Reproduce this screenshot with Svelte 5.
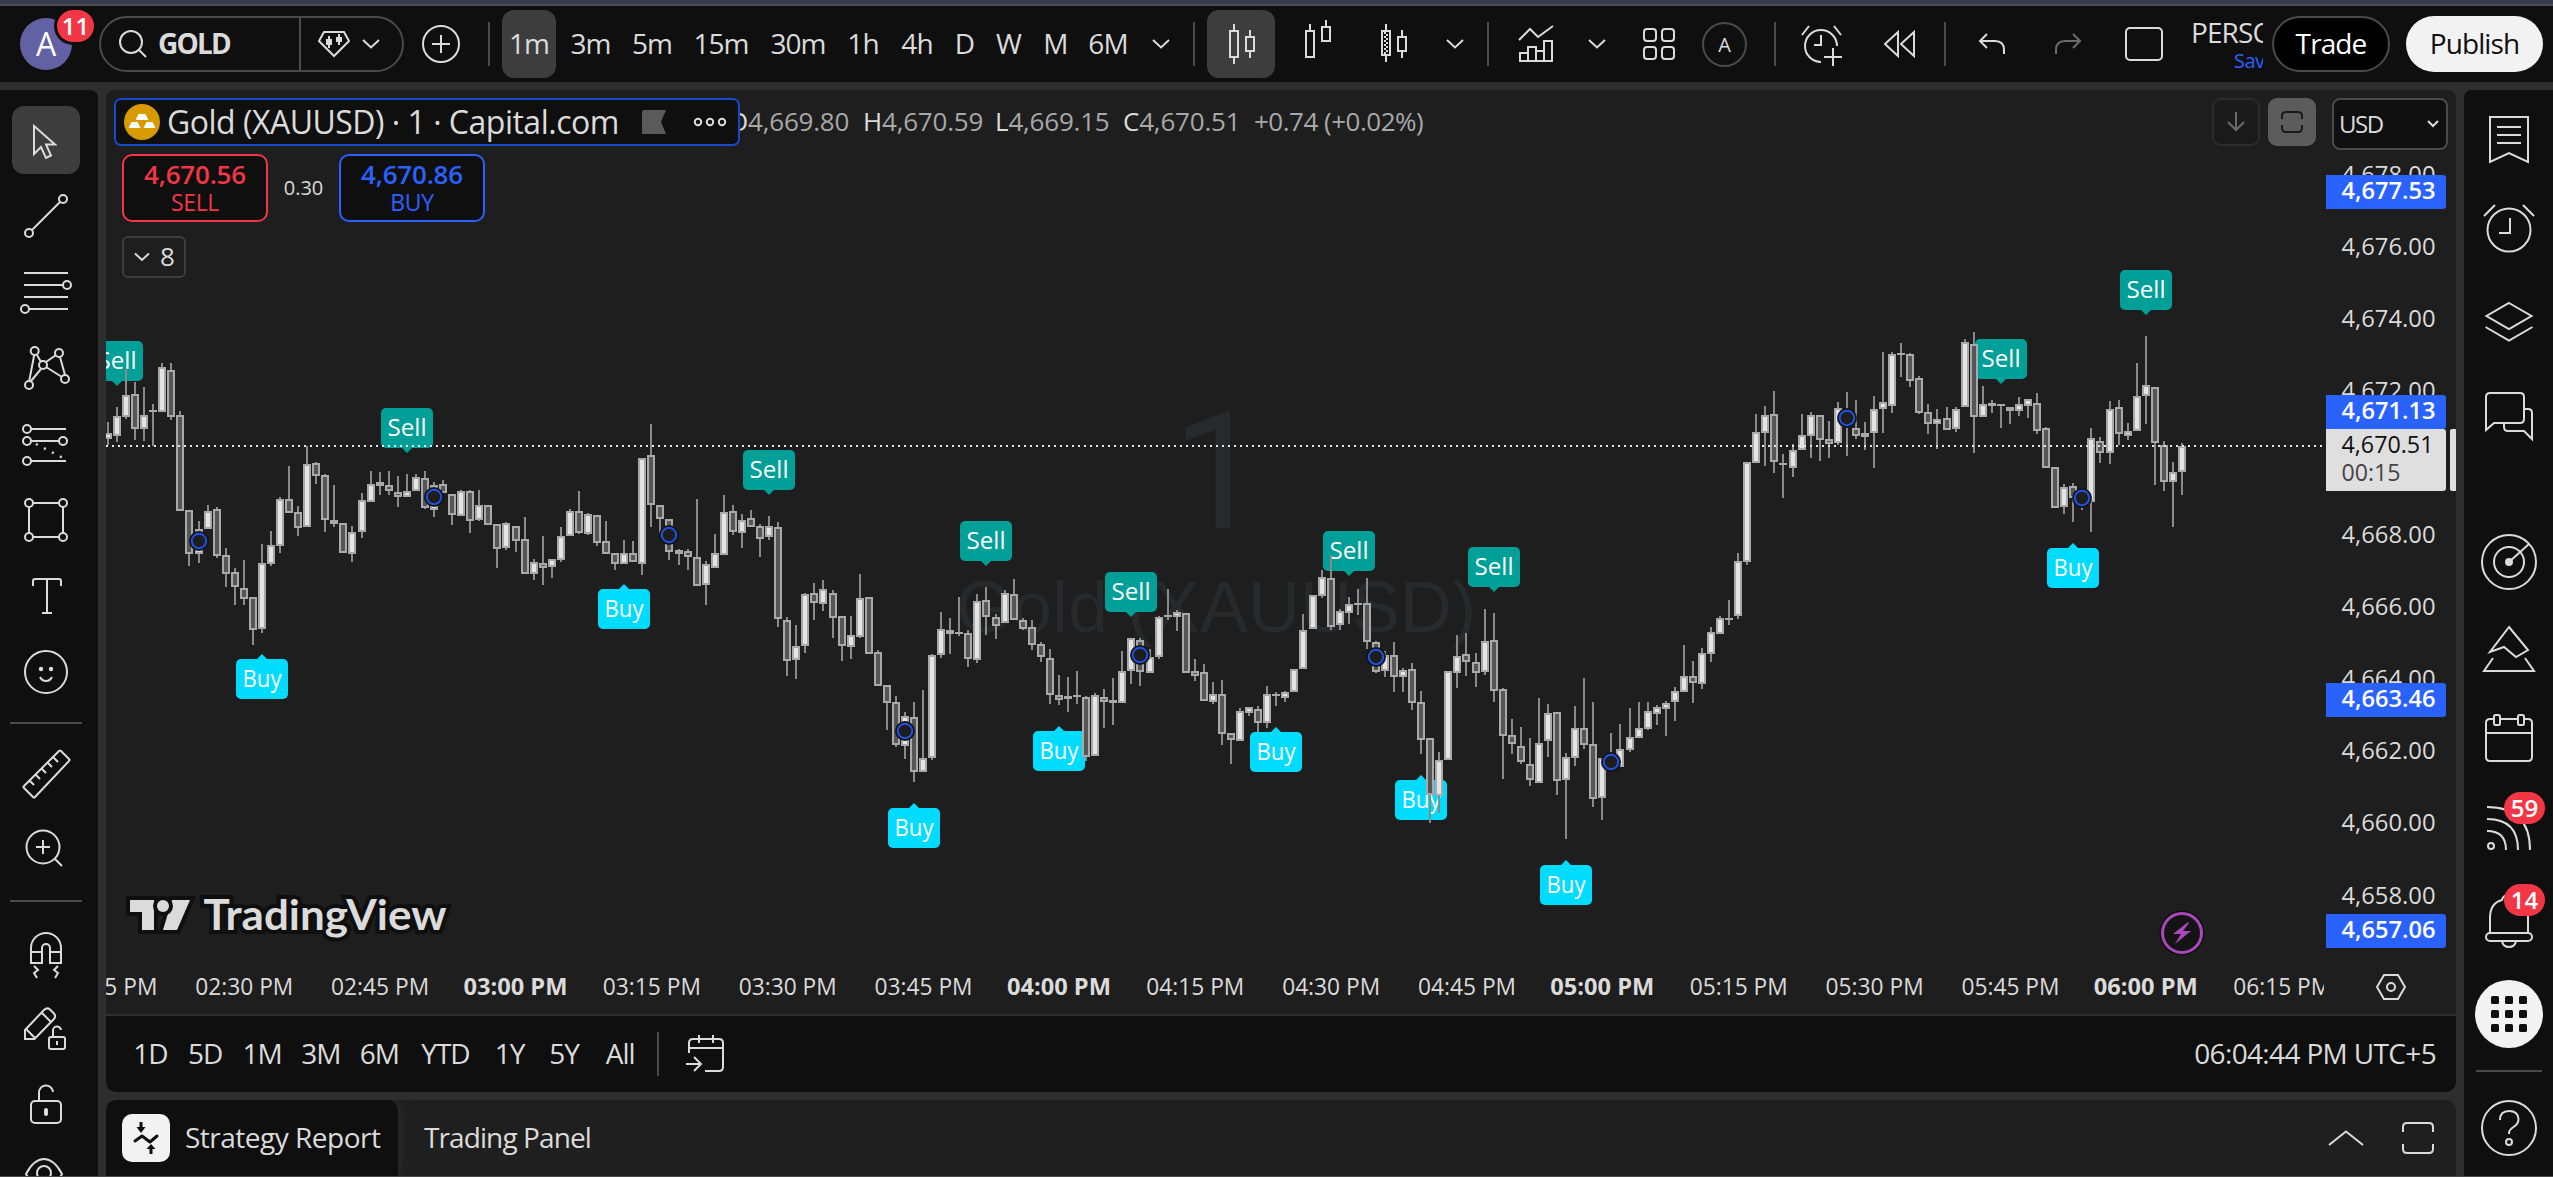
<script>
  const intervals = [
    ['1m', 54], ['3m', 54], ['5m', 54], ['15m', 69], ['30m', 70], ['1h', 45],
    ['4h', 48], ['D', 32], ['W', 41], ['M', 38], ['6M', 52]
  ];
  const ranges = [
    ['1D', 29], ['5D', 31], ['1M', 34], ['3M', 34], ['6M', 34],
    ['YTD', 49], ['1Y', 30], ['5Y', 30], ['All', 33]
  ];

  // Bars: high, body top, body bottom, low, w (up) or d (down).
  // Each group has its own origin and its own resolution in units per pixel.
  const groups = [
    { base: 290, unit: 3, bars: `396,430,446,466,w 351,378,438,456,w 235,315,381,386,w 276,312,416,450,d 290,375,416,452,w 342,360,366,468,d 219,231,366,366,w 219,240,381,390,d 363,375,663,663,d 660,660,792,828,d 693,717,792,819,w 645,663,717,717,w 651,657,798,804,d 774,795,852,890,d 834,846,891,945,d 810,894,927,945,d 921,921,1020,1065,d 762,819,1017,1028,w 723,765,822,828,w 621,627,768,789,w 528,627,669,669,d 648,666,714,738,d 468,522,711,711,w 516,519,558,582,d 552,555,690,726,d 585,690,702,711,d 699,699,789,789,d 708,726,792,816,w 609,630,726,744,w 543,582,636,636,w 546,576,588,615,d 543,585,603,615,d 558,606,621,651,d 552,603,621,621,w 552,561,603,603,w 543,564,655,657,d 576,585,660,681,w 570,582,609,609,d 612,612,675,705,d 600,603,678,678,w 600,603,693,729,d 600,645,690,693,w 645,645,705,705,d 702,702,777,834,d 697,699,774,780,w 708,708,753,786,d 681,747,852,852,d 807,816,852,870,w 738,819,834,885,d 807,807,831,864,w 711,738,810,816,w 657,663,738,738,w 603,663,729,732,d 669,672,732,735,w 675,675,759,768,d 693,753,792,792,d 789,789,822,840,d 750,789,822,822,w 753,789,816,816,d` },
    { base: 400, unit: 3, bars: `174,174,492,525,w 72,165,315,381,d 315,315,357,400,d 357,357,456,480,d 447,450,462,495,d 447,453,471,510,d 297,471,558,558,d 483,492,555,615,w 402,459,504,504,w 285,336,465,465,w 315,333,396,405,d 342,360,399,444,w 330,354,381,381,d 372,378,417,471,d 348,378,411,420,w 366,381,657,681,d 651,660,783,828,d 675,738,780,837,w 579,582,738,759,w 549,579,609,660,d 540,567,612,633,w 570,579,654,714,d 648,648,738,783,d 648,705,741,777,w 522,594,711,714,w 591,591,762,762,d 750,756,858,858,d 855,855,909,990,d 888,906,1035,1041,d 936,948,1038,1077,w 906,951,1116,1146,d 870,1074,1116,1116,w 762,765,1074,1080,w 636,687,765,774,w 654,690,702,762,d 591,696,702,708,d 690,699,777,801,d 582,603,780,789,w 561,600,651,705,d 642,651,678,717,d 570,579,669,669,w 537,582,660,660,d 654,660,687,690,d 660,681,735,750,d 726,732,771,786,d 747,774,885,912,d 825,885,900,915,d 831,888,897,936,d 813,885,891,912,d 888,891,1071,1083,d 879,885,1068,1068,w 867,891,906,984,d 834,900,909,975,d 753,813,909,909,w 714,714,813,852,w 714,720,816,858,d 747,771,819,819,w 648,651,771,777,w 567,645,651,660,d 630,636,651,693,w 639,639,819,819,d 777,813,828,843,d 792,816,903,903,d 846,882,906,912,w 840,882,1002,1035,d 999,999,1020,1092,d 924,933,1023,1023,w 921,921,939,948,w 918,927,969,996,d 858,882,969,984,w 876,882,888,918,d 873,876,894,906,w 807,807,876,876,w 642,690,807,807,w 585,585,687,687,w 510,531,588,594,w 465,534,681,690,d 627,633,675,690,w 591,612,639,672,w 567,609,615,645,d 534,609,726,747,d 723,726,816,819,d 753,765,813,831,w 726,765,831,876,d 804,810,831,876,w 789,807,909,930,d 873,906,1020,1062,d 1014,1014,1186,1269,d 1056,1080,1188,1239,w 813,813,1080,1080,w 705,768,819,864,w 699,762,786,828,d 759,786,819,861,d 627,723,816,825,w 639,720,873,906,d 864,867,1008,1137,d 957,1005,1032,1062,d 981,1038,1086,1092,d 1014,1092,1140,1158,d 894,1029,1149,1149,w 912,939,1023,1071,w 936,936,1143,1185,d 1059,1071,1140,1317,w 918,984,1074,1098,w 834,984,1035,1047,d 906,1032,1197,1221,d 1074,1074,1194,1260,w 999,1068,1080,1100,w 972,1047,1101,1101,w 924,1011,1050,1056,w 906,984,1014,1014,w 906,933,987,990,w 915,921,942,975,w 903,909,927,1008,w 861,873,906,963,w 735,828,876,876,w 783,828,849,909,d` },
    { base: 290, unit: 2.8, bars: `1002,1016,1103,1117,w 944,958,1019,1042,w 913,918,963,963,w 868,918,923,938,d 736,759,913,921,w 482,482,762,770,w 347,398,484,484,w 325,350,400,493,w 283,347,482,512,d 459,484,490,582,d 431,448,498,524,w 347,406,448,448,w 342,350,409,470,w 350,350,420,479,d 367,417,431,470,d 314,330,428,433,w 286,335,380,465,d 308,386,409,417,d 370,400,412,447,d 297,333,400,498,w 174,314,333,400,w 174,179,325,344,w 148,176,182,244,d 176,179,255,272,d 241,246,344,347,d 319,342,375,403,d 333,361,375,445,w 328,358,392,392,d 328,333,389,398,w 137,146,328,328,w 118,151,356,456,d 269,319,356,356,w 308,316,325,344,d 319,319,325,386,d 328,328,339,375,d 300,319,339,353,w 305,305,325,358,w 288,316,395,403,d 384,386,498,498,d 496,496,610,610,d 543,552,608,627,w 540,549,582,650,d 560,570,595,616,d 386,414,594,678,w 412,423,456,484,d 311,333,456,487,w 308,328,403,434,d 372,395,409,420,w 204,297,395,395,w 129,266,297,375,w 272,272,428,546,d 423,434,538,563,d 482,510,538,664,w 428,437,510,574,w` }
  ];

  const barX = (i) => Math.round(2182 - (229 - i) * 9.057);

  const bars = groups
    .flatMap((g) =>
      g.bars.split(' ').map((s) => {
        const p = s.split(',');
        const [h, t, b, l] = p.slice(0, 4).map((v) => Math.round(g.base + v / g.unit));
        return { h, t, b, l, up: p[4] === 'w' };
      })
    )
    .map((b, i) => ({ ...b, x: barX(i) }));

  const sells = [[1, 341], [33, 408], [73, 450], [97, 521], [113, 572], [137, 531], [153, 547], [209, 339], [225, 270]];
  const buys = [[17, 659], [57, 589], [89, 808], [105, 731], [129, 732], [145, 780], [161, 865], [217, 548]];
  const rings = [[10, 541], [36, 497], [62, 535], [88, 731], [114, 655], [140, 657], [166, 762], [192, 418], [218, 498]];

  const prices = [
    ['4,678.00', 175], ['4,676.00', 247], ['4,674.00', 319], ['4,672.00', 391], ['4,668.00', 535],
    ['4,666.00', 607], ['4,664.00', 679], ['4,662.00', 751], ['4,660.00', 823], ['4,658.00', 896]
  ];
  const levels = [['4,677.53', 175], ['4,671.13', 395], ['4,663.46', 683], ['4,657.06', 914]];

  const times = Array.from({ length: 17 }, (_, i) => {
    const m = 135 + i * 15;
    const text = `0${Math.floor(m / 60)}:${String(m % 60).padStart(2, '0')} PM`;
    return { text, x: 2145.8 - (15 - i) * 135.86, hour: m % 60 === 0 };
  });
</script>

{#snippet chevron()}
  <svg class="ic" width="18" height="10" viewBox="0 0 18 10"><path d="M1 1l8 7.500 8-7.500" /></svg>
{/snippet}

<div class="page">
  <div class="strip"></div>
  <header class="toolbar">
    <div class="avatar">A<span class="badge self">11</span></div>
    <div class="search">
      <div class="query">
        <svg class="ic" width="30" height="30" viewBox="0 0 30 30"><circle cx="13" cy="13" r="11" /><path d="M21 21l7 7" /></svg>
        <b>GOLD</b>
      </div>
      <div class="gem">
        <svg class="ic" width="32" height="28" viewBox="0 0 32 28"><path d="M6 2h20l5 9-15 15L1 11z" /><path d="M11 6v12M21 4v11" /><path class="solid" stroke="none" d="M8 9h6v6H8zM18 7h6v5h-6z" /></svg>
        {@render chevron()}
      </div>
    </div>
    <svg class="ic add" width="40" height="40" viewBox="0 0 40 40"><circle cx="20" cy="20" r="18" /><path d="M11 20h18M20 11v18" /></svg>
    <i class="sep"></i>
    <nav class="intervals">
      {#each intervals as [label, w], i}
        <span class="btn" class:on={i === 0} style:width="{w}px">{label}</span>
      {/each}
    </nav>
    <span class="c1">{@render chevron()}</span>
    <i class="sep s2"></i>
    <div class="types">
      <span class="type on">
        <svg class="ic" width="68" height="68" viewBox="1207 10 68 68"><path d="M1230 31h8v26h-8zM1234 31v-7M1234 57v7M1246 37h8v14h-8zM1250 37v-7M1250 51v7" /></svg>
      </span>
      <svg class="ic" width="68" height="68" viewBox="1283 10 68 68"><path d="M1306 31h8v26h-8zM1310 31v-7M1322 27h8v14h-8zM1326 27v-7" /></svg>
      <svg class="ic" width="68" height="68" viewBox="1359 10 68 68"><path d="M1382 31h8v24h-8zM1386 31v-7M1386 55v7M1398 37h8v14h-8zM1402 37v-7M1402 51v7" /><path stroke-dasharray="2 2" d="M1385 32v22" /><path stroke-dasharray="2 2" d="M1387 34v20" /></svg>
    </div>
    <span class="c2">{@render chevron()}</span>
    <i class="sep s3"></i>
    <svg class="ic ind" width="36" height="40" viewBox="1518 24 36 40"><path d="M1519 40l11-11 8 8 15-11M1520 61V53h8v8M1528 61V47h8v14M1536 61V51h8v10M1544 61V41h8v20M1519 61h34" /></svg>
    <span class="c3">{@render chevron()}</span>
    <svg class="ic grid" width="34" height="34" viewBox="0 0 34 34"><rect x="2" y="2" width="12" height="12" rx="3" /><rect x="20" y="2" width="12" height="12" rx="3" /><rect x="2" y="20" width="12" height="12" rx="3" /><rect x="20" y="20" width="12" height="12" rx="3" /></svg>
    <span class="ring-a">A</span>
    <i class="sep s4"></i>
    <svg class="ic alert" width="44" height="44" viewBox="1801 23 44 44"><path d="M1838 46a16 16 0 1 0-16 16M1822 35v10h-7M1803 35l7-9M1842 35l-7-9M1834 48v18M1825 57h18" /></svg>
    <svg class="ic rew" width="32" height="28" viewBox="0 0 32 28"><path d="M15 2v24L2 14zM31 2v24L18 14z" /></svg>
    <i class="sep s5"></i>
    <svg class="ic undo" width="28" height="22" viewBox="0 0 28 22"><path d="M9 1L2 8l7 7M2 8h15q9 0 9 9v4" /></svg>
    <svg class="ic dim redo" width="28" height="22" viewBox="0 0 28 22"><path d="M19 1l7 7-7 7M26 8H11q-9 0-9 9v4" /></svg>
    <svg class="ic full" width="38" height="34" viewBox="0 0 38 34"><rect x="1" y="1" width="36" height="32" rx="4" /></svg>
    <div class="layout"><span>PERSO</span><em>Save</em></div>
    <span class="pill trade">Trade</span>
    <span class="pill publish">Publish</span>
  </header>

  <div class="body">
    <aside class="left">
      <svg class="ic sel" width="68" height="68" viewBox="12 106 68 68"><path d="M34 126v28l7-7 5 11 5-2.500-5-11h9z" /></svg>
      <svg class="ic" width="68" height="68" viewBox="12 182 68 68"><circle cx="29" cy="233" r="4" /><circle cx="63" cy="199" r="4" /><path d="M32 230l28-28" /></svg>
      <svg class="ic" width="68" height="68" viewBox="12 258 68 68"><path d="M24 273h44M24 285h39M24 297h44M29 309h39" /><circle cx="67" cy="285" r="4" /><circle cx="25" cy="309" r="4" /></svg>
      <svg class="ic" width="68" height="68" viewBox="12 334 68 68"><path d="M29.200 381l5-26M37 355l4 7M46 362l10-7M60 357l5 18M46 367l16 10M31 381l10-12" /><circle cx="34.700" cy="351" r="4" /><circle cx="59" cy="353" r="4" /><circle cx="43" cy="365" r="4" /><circle cx="29" cy="385" r="4" /><circle cx="65" cy="379" r="4" /></svg>
      <svg class="ic" width="68" height="68" viewBox="12 410 68 68"><path d="M31 429h35M31 441h28M31 461h35" /><circle cx="27" cy="429" r="4" /><circle cx="27" cy="441" r="4" /><circle cx="63" cy="441" r="4" /><circle cx="27" cy="461" r="4" /><path stroke-dasharray="2 7" stroke-width="2.500" d="M36 444l27 14" /></svg>
      <svg class="ic" width="68" height="68" viewBox="12 486 68 68"><path d="M33 503h26M33 537h26M29 507v26M63 507v26" /><circle cx="29" cy="503" r="4" /><circle cx="63" cy="503" r="4" /><circle cx="29" cy="537" r="4" /><circle cx="63" cy="537" r="4" /></svg>
      <svg class="ic" width="68" height="68" viewBox="12 562 68 68"><path d="M33 586v-5q0-2 2-2h24q2 0 2 2v5M47 579v34M42 613h10" /></svg>
      <svg class="ic" width="68" height="68" viewBox="12 638 68 68"><circle cx="46" cy="672" r="21" /><path d="M40 677q2 4 6 4t6-4" /><circle class="solid" stroke="none" cx="41" cy="669" r="2.200" /><circle class="solid" stroke="none" cx="51" cy="669" r="2.200" /></svg>
      <hr />
      <svg class="ic" width="68" height="68" viewBox="12 740 68 68"><path d="M59 751q1-1 2 0l8 8q1 1 0 2l-34 36q-1 1-2 0l-9-9q-1-1 0-2zM29 780l5 5M35 774l5 5M41 768l5 5M47 762l5 5M53 757l5 5" /></svg>
      <svg class="ic" width="68" height="68" viewBox="12 816 68 68"><circle cx="43" cy="847" r="16.500" /><path d="M55 859l7 7M36 847h14M43 840v14" /></svg>
      <hr />
      <svg class="ic" width="68" height="68" viewBox="12 918 68 68"><path d="M31 963v-15a15 15 0 0 1 30 0v15H50v-15a4 4 0 0 0-8 0v15zM31 952h11M50 952h11M34 966l4 4-4 3 3 5M58 966l-4 4 4 3-3 5" /></svg>
      <svg class="ic" width="68" height="68" viewBox="12 994 68 68"><path d="M25 1039v-9l19-20q3-3 6-.500l4 4q2.500 3-.500 6l-19 19.500zM42 1013l9 9M26 1029l9 9" /><rect x="49" y="1037" width="16" height="12" rx="2" /><path d="M53 1037v-6a4 4 0 0 1 8-1M57 1041v4" /></svg>
      <svg class="ic" width="68" height="68" viewBox="12 1070 68 68"><rect x="31" y="1101" width="30" height="22" rx="4" /><path d="M39 1101v-8a7 7 0 0 1 14-1" /><rect class="solid" x="45" y="1109" width="2" height="6" rx="1" /></svg>
      <svg class="ic" width="68" height="68" viewBox="12 1146 68 68"><path d="M26 1174q8-15 18-15t18 15q-8 15-18 15t-18-15z" /><circle cx="44" cy="1173" r="7" /></svg>
    </aside>

    <main>
      <section class="chart">
        <svg class="plot" width="2350" height="924" viewBox="106 90 2350 924">
          <defs><clipPath id="pane"><rect x="106" y="90" width="2218" height="924" /></clipPath></defs>
          <g class="mark"><text class="res" x="1218" y="528" font-size="163">1</text><text x="1216" y="632" font-size="72">Gold (XAUUSD)</text></g>
          <g clip-path="url(#pane)">
            {#each sells as [i, y]}
              <path fill="#009f98" d="M{barX(i) - 6} {y + 39}h12l-6 6z" />
              <rect fill="#009f98" x={barX(i) - 26} {y} width="52" height="40" rx="5" />
              <text class="tag" x={barX(i) - 19.5} y={y + 28} textLength="39" lengthAdjust="spacingAndGlyphs">Sell</text>
            {/each}
            {#each buys as [i, y]}
              <path fill="#00dcff" d="M{barX(i) - 6} {y + 1}h12l-6 -6z" />
              <rect fill="#00dcff" x={barX(i) - 26} {y} width="52" height="40" rx="5" />
              <text class="tag" x={barX(i) - 19.5} y={y + 28} textLength="39" lengthAdjust="spacingAndGlyphs">Buy</text>
            {/each}
            <g shape-rendering="crispEdges">
              {#each bars as b}
                <rect fill="#8a8a8a" x={b.x - 1} y={b.h} width="2" height={b.l - b.h} />
                <rect fill="#a9a9a9" x={b.x - 4} y={b.t} width="8" height={b.b - b.t} />
                {#if b.b - b.t > 4}
                  <rect fill={b.up ? '#e4e4e4' : '#565656'} x={b.x - 2} y={b.t + 2} width="4" height={b.b - b.t - 4} />
                {/if}
              {/each}
              <path stroke="#e6e6e6" stroke-width="2" stroke-dasharray="2 4" d="M106 446H2324" />
            </g>
            {#each rings as [i, y]}
              <circle cx={barX(i)} cy={y} r="10" fill="#141414" />
              <circle cx={barX(i)} cy={y} r="7.200" fill="#1e1e1e" stroke="#1f52e6" stroke-width="2" />
            {/each}
            {#each times as t}
              <text class="axis" class:hour={t.hour} x={t.x - (t.hour ? 52 : 48.5)} y="995" textLength={t.hour ? 104 : 98} lengthAdjust="spacingAndGlyphs">{t.text}</text>
            {/each}
          </g>
          <g class="brand">
            <path d="M130 900h24v30h-12v-18h-12zM172 900h18l-13 30h-14z" /><circle cx="163" cy="906" r="6" />
            <text x="203.500" y="930" textLength="243" lengthAdjust="spacingAndGlyphs">TradingView</text>
          </g>
          <circle cx="2182" cy="933" r="22.500" fill="#0f0f0f" />
          <circle cx="2182" cy="933" r="19.500" fill="#141414" stroke="#ab47bc" stroke-width="3" />
          <path fill="#ab47bc" d="M2188 922l-15 12h8l-6 10 16-13h-8l6-8z" />
          {#each prices as [text, y]}
            <text class="axis" x="2341.500" y={y + 8} textLength="94" lengthAdjust="spacingAndGlyphs">{text}</text>
          {/each}
          {#each levels as [text, y]}
            <path fill="#2962ff" d="M2326 {y}h117q3 0 3 3v28q0 3-3 3h-117z" />
            <text class="axis level" x="2341.500" y={y + 24} textLength="94" lengthAdjust="spacingAndGlyphs">{text}</text>
          {/each}
          <path fill="#dfdfdf" d="M2326 429h117q3 0 3 3v56q0 3-3 3h-117z" />
          <text class="axis last" x="2341.500" y="453" textLength="92" lengthAdjust="spacingAndGlyphs">4,670.51</text>
          <text class="axis count" x="2341.500" y="481" textLength="59" lengthAdjust="spacingAndGlyphs">00:15</text>
          <rect fill="#dfdfdf" x="2450" y="429" width="7" height="62" rx="2" />
          <g class="ic"><path d="M2377 987l7-12h14l7 12-7 12h-14z" /><circle cx="2391" cy="987" r="4" /></g>
        </svg>

        <div class="over">
          <div class="legend">
            <div class="symbol">
              <svg width="36" height="36" viewBox="0 0 36 36"><circle cx="18" cy="18" r="18" fill="#d79a00" /><path fill="#fff" d="M14.500 10h7l3 6h-13zM7.500 18h6l3 6H4.500zM22.500 18h6l3 6h-12z" /></svg>
              <span>Gold (XAUUSD) · 1 · Capital.com</span>
              <svg class="flag" width="25" height="24" viewBox="0 0 25 24"><path fill="#5a5a5a" d="M0 2q0-2 2-2h22l-5 12 5 12H0z" /></svg>
              <svg class="ic" width="36" height="12" viewBox="0 0 36 12"><circle cx="6" cy="6" r="3.200" /><circle cx="18" cy="6" r="3.200" /><circle cx="30" cy="6" r="3.200" /></svg>
            </div>
            <div class="ohlc">
              <span class="o"><b>O</b>4,669.80</span>
              <span class="h"><b>H</b>4,670.59</span>
              <span class="l"><b>L</b>4,669.15</span>
              <span class="c"><b>C</b>4,670.51</span>
              <span class="chg">+0.74 (+0.02%)</span>
            </div>
          </div>
          <div class="quotes">
            <div class="quote sell"><b>4,670.56</b><span>SELL</span></div>
            <span class="spread">0.30</span>
            <div class="quote buy"><b>4,670.86</b><span>BUY</span></div>
          </div>
          <div class="more"><svg class="ic" width="16" height="10" viewBox="0 0 16 10"><path d="M1 1.500l7 6.500 7-6.500" /></svg><span>8</span></div>
        </div>

        <div class="tools">
          <span class="tool"><svg class="ic dim" width="20" height="20" viewBox="0 0 20 20"><path d="M10 0v18M2 10l8 8 8-8" /></svg></span>
          <span class="tool lit"><svg class="ic" width="24" height="24" viewBox="0 0 24 24"><path d="M2 9V6q0-4 4-4h12q4 0 4 4v3M2 15v3q0 4 4 4h12q4 0 4-4v-3" /></svg></span>
          <span class="cur"><span>USD</span><svg class="ic" width="12" height="8" viewBox="0 0 12 8"><path d="M1 1l5 5 5-5" /></svg></span>
        </div>
      </section>

      <section class="rangebar">
        {#each ranges as [label, w]}
          <span style:width="{w}px">{label}</span>
        {/each}
        <i class="sep"></i>
        <svg class="ic goto" width="42" height="42" viewBox="683 1032 42 42"><path d="M688 1052v-10q0-4 4-4h26q4 0 4 4v24q0 4-4 4h-14M688 1047h34M698 1034v8M712 1034v8M685 1063h14M693 1056l7 7-7 7" /></svg>
        <span class="clock">06:04:44 PM UTC+5</span>
      </section>

      <section class="panel">
        <div class="tab">
          <svg width="48" height="48" viewBox="0 0 48 48"><rect width="48" height="48" rx="10" fill="#f2f2f2" /><path fill="none" stroke="#0f0f0f" stroke-width="3" stroke-linejoin="round" stroke-linecap="round" d="M13 27l7-5 8 6 7-6" /><path fill="#0f0f0f" d="M17.500 8h3v5h3l-4.500 6-4.500-6h3zM27.500 40h3v-5h3l-4.500-5-4.500 5h3z" /></svg>
          <span>Strategy Report</span>
        </div>
        <span class="tab2">Trading Panel</span>
        <svg class="ic up" width="36" height="16" viewBox="0 0 36 16"><path d="M1 15L18 1.500 35 15" /></svg>
        <svg class="ic max" width="32" height="32" viewBox="0 0 32 32"><path d="M1 10V5q0-4 4-4h22q4 0 4 4v5M1 22v5q0 4 4 4h22q4 0 4-4v-5" /></svg>
      </section>
    </main>

    <aside class="right">
      <svg class="ic" width="89" height="88" viewBox="2464 96 89 88"><path d="M2490 117h38v45l-19-9-19 9zM2497 127h24M2497 135h24M2497 143h24" /></svg>
      <svg class="ic" width="89" height="91" viewBox="2464 184 89 91"><circle cx="2509" cy="230" r="21.500" /><path d="M2510 218v15h-11M2484 216l11-11M2534 216l-11-11" /></svg>
      <svg class="ic" width="89" height="94" viewBox="2464 275 89 94"><path d="M2509 303l22.500 13-22.500 13-22.500-13zM2485.500 327l23.500 13.500 23.500-13.500" /></svg>
      <svg class="ic" width="89" height="147" viewBox="2464 369 89 147"><path d="M2486 430v-33q0-4 4-4h30q4 0 4 4v22q0 4-4 4h-26zM2525 409h3q4 0 4 4v26l-8-8h-16q-4 0-4-4v-3" /></svg>
      <svg class="ic" width="89" height="90" viewBox="2464 516 89 90"><circle cx="2509" cy="562" r="27" /><circle cx="2509" cy="562" r="15" /><circle class="solid" cx="2509" cy="562" r="3" /><path d="M2509 562l20-18" /></svg>
      <svg class="ic" width="89" height="88" viewBox="2464 606 89 88"><path d="M2509 627l19 23-12 7-12-10-14 5zM2493 658l-9 13h50l-9-13" /></svg>
      <svg class="ic" width="89" height="89" viewBox="2464 694 89 89"><path d="M2494 719h-4q-4 0-4 4v34q0 4 4 4h38q4 0 4-4v-34q0-4-4-4h-4M2500 719h18M2486 733h46" /><rect x="2494" y="715" width="6" height="10" rx="1.500" /><rect x="2518" y="715" width="6" height="10" rx="1.500" /></svg>
      <div class="with-badge">
        <svg class="ic" width="89" height="92" viewBox="2464 783 89 92"><circle cx="2491" cy="846" r="3" /><path d="M2487 831q19 0 19 19M2487 819q31 0 31 31M2487 807q43 0 43 43" /></svg>
        <span class="badge feed">59</span>
      </div>
      <div class="with-badge">
        <svg class="ic" width="89" height="93" viewBox="2464 875 89 93"><path d="M2490 932v-14q0-15 12-18 1-5 7-5t7 5q12 3 12 18v14" /><rect x="2486" y="933" width="46" height="8" rx="4" /><path d="M2502 941q1 6 7 6t7-6" /></svg>
        <span class="badge bell">14</span>
      </div>
      <svg width="89" height="92" viewBox="2464 968 89 92"><circle cx="2509" cy="1014" r="34" fill="#f2f2f2" />
        {#each [0, 1, 2] as r}{#each [0, 1, 2] as c}<rect x={2491 + c * 14} y={996 + r * 14} width="8" height="8" rx="1.500" fill="#0f0f0f" />{/each}{/each}
      </svg>
      <hr />
      <svg class="ic" width="89" height="92" viewBox="2464 1082 89 92"><circle cx="2509" cy="1128" r="27" /><path d="M2500 1120q0-9 9-9t9.500 8q0 5-5 8t-4.500 7" /><circle cx="2509" cy="1142" r="3" /></svg>
    </aside>
  </div>
</div>

<style>
  :global(body) { background: #2e2e2e; overflow: hidden; }
  .page {
    width: 2553px; height: 1177px; overflow: hidden; display: flex; flex-direction: column;
    color: #dbdbdb; background: #2e2e2e;
    font: 500 28px 'Open Sans', 'Noto Sans', sans-serif; font-stretch: 92%; box-sizing: border-box;
    border-bottom: 1px solid #4a4a4a;
  }
  .page :global(*) { box-sizing: border-box; }
  svg { display: block; flex: none; }
  span, b, em { white-space: nowrap; }
  .ic { fill: none; stroke: #dbdbdb; stroke-width: 2; }
  .ic .solid { fill: #dbdbdb; }
  .dim { stroke: #6b6b6b; }

  .strip { flex: none; height: 6px; background: #353c50; border-bottom: 2px solid #4a4a50; }
  .toolbar { flex: none; height: 76px; margin-bottom: 8px; background: #0f0f0f; display: flex; align-items: center; padding-left: 20px; }
  .toolbar > * { flex: none; }
  .avatar { position: relative; width: 52px; height: 52px; border-radius: 50%; background: #6261a3; color: #fff; font-size: 32px; display: flex; align-items: center; justify-content: center; padding-bottom: 2px; }
  .badge { position: absolute; background: #f23645; color: #fff; border-radius: 16px; height: 32px; font-size: 24px; font-weight: 600; display: flex; align-items: center; justify-content: center; padding-bottom: 1px; }
  .self { left: 37px; top: -8px; width: 37px; box-shadow: 0 0 0 3px #0f0f0f; }
  .search { margin-left: 27px; width: 305px; height: 56px; border: 2px solid #4a4a4a; border-radius: 28px; display: flex; }
  .query { width: 200px; border-right: 2px solid #4a4a4a; display: flex; align-items: center; padding-left: 17px; gap: 10px; }
  .query b { font-weight: 700; letter-spacing: -1.8px; padding-bottom: 2px; }
  .gem { display: flex; align-items: center; padding-left: 17px; gap: 12px; }
  .add { margin-left: 17px; }
  .sep { width: 2px; height: 44px; background: #4a4a4a; margin-left: 27px; }
  .intervals { display: flex; gap: 7.500px; margin-left: 12px; }
  .btn { height: 68px; border-radius: 12px; display: flex; align-items: center; justify-content: center; letter-spacing: -0.9px; padding-bottom: 2px; }
  .on { background: #3d3d3d; }
  .c1 { margin-left: 18px; }
  .s2 { margin-left: 23px; }
  .types { display: flex; gap: 8px; margin-left: 12px; }
  .type { border-radius: 12px; }
  .c2 { margin-left: 19px; }
  .s3 { margin-left: 23px; }
  .ind { margin-left: 29px; }
  .c3 { margin-left: 34px; }
  .grid { margin-left: 36px; }
  .ring-a { margin-left: 26px; width: 45px; height: 45px; border: 2px solid #4a4a4a; border-radius: 50%; font-size: 20px; display: flex; align-items: center; justify-content: center; }
  .s4 { margin-left: 27px; }
  .alert { margin-left: 24px; margin-top: 2px; }
  .rew { margin-left: 39px; }
  .s5 { margin-left: 29px; }
  .undo { margin-left: 32px; }
  .redo { margin-left: 48px; }
  .full { margin-left: 43px; }
  .layout { width: 72px; height: 76px; margin-left: 28px; overflow: hidden; display: flex; flex-direction: column; }
  .layout span { line-height: 30px; margin-top: 11px; letter-spacing: -0.9px; }
  .layout em { font-style: normal; color: #2962ff; font-size: 20px; line-height: 24px; margin: 2px 0 0 43px; letter-spacing: -0.5px; }
  .pill { height: 56px; border-radius: 28px; display: flex; align-items: center; justify-content: center; letter-spacing: -0.9px; padding-bottom: 2px; }
  .trade { margin-left: 9px; width: 118px; background: #000; border: 2px solid #4a4a4a; color: #fff; }
  .publish { margin-left: 16px; width: 137px; background: #f2f2f2; color: #0f0f0f; }

  .body { flex: 1; min-height: 0; display: flex; gap: 8px; }
  .left { width: 98px; background: #0f0f0f; border-radius: 0 8px 0 0; padding: 16px 0 0 12px; display: flex; flex-direction: column; gap: 8px; overflow: hidden; }
  .left hr { width: 72px; height: 2px; border: 0; background: #4a4a4a; margin: 8px 0 8px -2px; flex: none; }
  .sel { background: #3d3d3d; border-radius: 12px; }
  .right { width: 89px; background: #0f0f0f; border-radius: 8px 0 0 0; padding-top: 6px; display: flex; flex-direction: column; overflow: hidden; }
  .right hr { width: 66px; height: 2px; border: 0; background: #4a4a4a; margin: 10px 0 10px 12px; flex: none; }
  .with-badge { position: relative; }
  .feed { left: 40px; top: 9px; width: 41px; }
  .bell { left: 40px; top: 9px; width: 41px; }

  main { width: 2350px; display: flex; flex-direction: column; }
  .chart { position: relative; height: 924px; background: #1e1e1e; border-radius: 8px 8px 0 0; overflow: hidden; }
  .mark text { font-family: 'Liberation Sans', Arial, sans-serif; font-weight: 400; fill: #28292b; text-anchor: middle; }
  .mark .res { font-family: Roboto, sans-serif; }
  .tag { font-size: 24px; fill: #fff; font-weight: 500; }
  .axis { font-size: 24px; fill: #dbdbdb; }
  .hour { font-weight: 700; }
  .level { fill: #fff; font-weight: 600; }
  .last { fill: #0f0f0f; font-weight: 500; }
  .count { fill: #444; }
  .brand { fill: #dbdbdb; stroke: #0f0f0f; stroke-width: 8; paint-order: stroke; }
  .brand text { font: 700 42px Lato, Inter, sans-serif; }

  .over { position: absolute; left: 8px; top: 8px; display: flex; flex-direction: column; align-items: flex-start; }
  .legend { display: flex; align-items: center; }
  .symbol { position: relative; z-index: 1; width: 626px; height: 48px; border: 2px solid #1848cc; border-radius: 7px; background: #0f0f0f; display: flex; align-items: center; padding-left: 8px; }
  .symbol > span { font-size: 32px; font-weight: 400; width: 482px; padding: 0 0 2px 7px; letter-spacing: -0.5px; }
  .flag { margin-right: 25px; }
  .ohlc { display: flex; font-size: 26px; font-weight: 400; color: #a8a8a8; margin-left: -12px; letter-spacing: -0.2px; padding-bottom: 2px; }
  .ohlc b { font-weight: 500; color: #dbdbdb; }
  .o { width: 135px; } .h { width: 132px; } .l { width: 128px; } .c { width: 131px; }
  .chg { letter-spacing: -0.5px; }
  .quotes { display: flex; align-items: center; margin: 8px 0 0 8px; }
  .quote { width: 146px; height: 68px; border: 2px solid; border-radius: 10px; background: #0f0f0f; display: flex; flex-direction: column; align-items: center; padding-top: 4px; }
  .quote b { font-size: 26px; line-height: 29px; font-weight: 600; letter-spacing: -0.2px; }
  .quote span { font-size: 23px; line-height: 26px; font-weight: 400; letter-spacing: -0.4px; }
  .sell { color: #f23645; }
  .buy { color: #2962ff; }
  .spread { width: 71px; text-align: center; font-size: 20px; padding-bottom: 2px; }
  .more { margin: 14px 0 0 8px; width: 64px; height: 42px; border: 2px solid #3d3d3d; border-radius: 6px; display: flex; align-items: center; justify-content: center; gap: 10px; font-size: 26px; padding-left: 1px; }
  .more span { padding-bottom: 2px; }

  .tools { position: absolute; right: 8px; top: 8px; display: flex; }
  .tool { width: 48px; height: 48px; border: 2px solid #2b2b2b; border-radius: 9px; display: flex; align-items: center; justify-content: center; margin-right: 8px; background: #1b1b1b; }
  .lit { background: #5c5c5c; border-color: #5c5c5c; margin-right: 16px; }
  .lit .ic { stroke: #1a1a1a; }
  .cur { width: 116px; height: 52px; border: 2px solid #4a4a4a; border-radius: 8px; background: #0f0f0f; display: flex; align-items: center; justify-content: space-between; padding: 0 7px 0 5px; font-size: 24px; letter-spacing: -1.5px; }
  .cur span { padding-bottom: 1px; }

  .rangebar { flex: none; height: 76px; margin-top: 2px; background: #0f0f0f; border-radius: 0 0 10px 10px; display: flex; align-items: center; gap: 24.600px; padding-left: 30px; }
  .rangebar span { display: flex; justify-content: center; letter-spacing: -1px; flex: none; padding-bottom: 2px; }
  .rangebar .sep { margin-left: -4px; }
  .rangebar .clock { margin-left: auto; margin-right: 20px; letter-spacing: -0.65px; }
  .goto { margin-left: 0; }

  .panel { flex: none; height: 76px; margin-top: 8px; background: #1f1f1f; border-radius: 10px 10px 0 0; display: flex; align-items: center; overflow: hidden; }
  .tab { width: 292px; height: 76px; background: #0f0f0f; border-radius: 10px 10px 0 0; display: flex; align-items: center; padding-left: 16px; gap: 15px; box-shadow: 0 0 12px #333; }
  .tab span, .tab2 { letter-spacing: -0.5px; padding-bottom: 2px; }
  .tab2 { margin-left: 26px; letter-spacing: -0.9px; }
  .up { margin-left: auto; }
  .max { margin: 0 22px 0 38px; }
</style>
